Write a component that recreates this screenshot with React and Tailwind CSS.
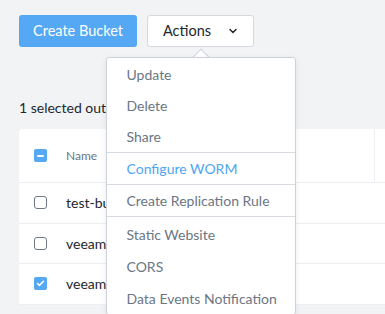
import React from 'react';
import { ChevronDown, Check } from 'lucide-react';

const groups = [
  { items: ['Update', 'Delete', 'Share'], h: 'h-[31px]' },
  { items: ['Configure WORM'], h: 'h-[31px]', active: true },
  { items: ['Create Replication Rule'], h: 'h-[31px]' },
  { items: ['Static Website', 'CORS', 'Data Events Notification'], h: 'h-8', pad: true },
];

const rows = [
  { name: 'test-bucket-01', checked: false },
  { name: 'veeam-backup', checked: false },
  { name: 'veeam-archive', checked: true },
];

const Box = ({ state }) => {
  if (state === 'some') {
    return (
      <span className="w-[13px] h-[13px] rounded-[2px] bg-[#55a8f3] flex items-center justify-center">
        <span className="w-[7px] h-[2px] bg-white rounded-sm" />
      </span>
    );
  }
  if (state === 'on') {
    return (
      <span className="w-[13px] h-[13px] rounded-[2px] bg-[#55a8f3] flex items-center justify-center">
        <Check className="w-[9px] h-[9px] text-white" strokeWidth={4} />
      </span>
    );
  }
  return <span className="w-[13px] h-[13px] rounded-[3px] border-[1.5px] border-[#6e7885] bg-white" />;
};

const ActionsMenu = () => (
  <div className="absolute top-[42px] left-1/2 -translate-x-1/2 w-[190px] z-10">
    <div className="absolute -top-[6px] left-1/2 -translate-x-1/2 w-[12px] h-[12px] rotate-45 bg-white border-l border-t border-[#cdd2da]" />
    <div className="relative bg-white border border-[#cdd2da] rounded-[3px] shadow-[0_2px_6px_rgba(0,0,0,0.08)] pt-px">
      {groups.map((g, gi) => (
        <div key={gi} className={`${gi > 0 ? 'border-t border-[#d8dce2]' : ''} ${g.pad ? 'pt-px' : ''}`}>
          {g.items.map((it) => (
            <div
              key={it}
              className={`${g.h} flex items-center pl-[20px] text-[14px] whitespace-nowrap ${
                g.active ? 'text-[#4ea5f0]' : 'text-[#6b7684]'
              }`}
            >
              {it}
            </div>
          ))}
        </div>
      ))}
    </div>
  </div>
);

const App = () => {
  return (
    <div
      className="w-[385px] h-[314px] overflow-hidden bg-[#f2f3f5] pl-[19px] pt-[15px]"
      style={{ fontFamily: 'Lato, "Open Sans", sans-serif' }}
    >
      <div className="flex items-center gap-[10px]">
        <button className="h-[32px] w-[118px] rounded-[3px] bg-[#55a8f3] text-white text-[14.5px]">
          Create Bucket
        </button>
        <div className="relative">
          <button className="h-[32px] w-[107px] rounded-[3px] bg-white border border-[#d5d9de] flex items-center pl-[15px] pr-[14px] text-[14.5px] text-[#22272e]">
            <span className="flex-1 text-left">Actions</span>
            <ChevronDown className="w-[12px] h-[12px] text-[#22272e]" strokeWidth={3} />
          </button>
          <ActionsMenu />
        </div>
      </div>

      <div className="mt-[54px] text-[14px] text-[#22272e] leading-none">1 selected out of 12 buckets</div>

      <div className="mt-[14px] w-[420px] bg-white rounded-tl-[4px]">
        <div className="flex h-[54px] items-center border-b border-[#eceef1]">
          <div className="w-[355px] flex items-center pl-[15px] gap-[19px]">
            <Box state="some" />
            <span className="text-[12px] text-[#6b7684]">Name</span>
          </div>
          <div className="h-full border-l border-[#eceef1] flex-1" />
        </div>
        {rows.map((r) => (
          <div key={r.name} className="flex h-[40.5px] items-center border-b border-[#eceef1] pl-[15px] gap-[19px]">
            <Box state={r.checked ? 'on' : 'off'} />
            <span className="text-[14px] text-[#22272e]">{r.name}</span>
          </div>
        ))}
      </div>
    </div>
  );
};

export default App;
